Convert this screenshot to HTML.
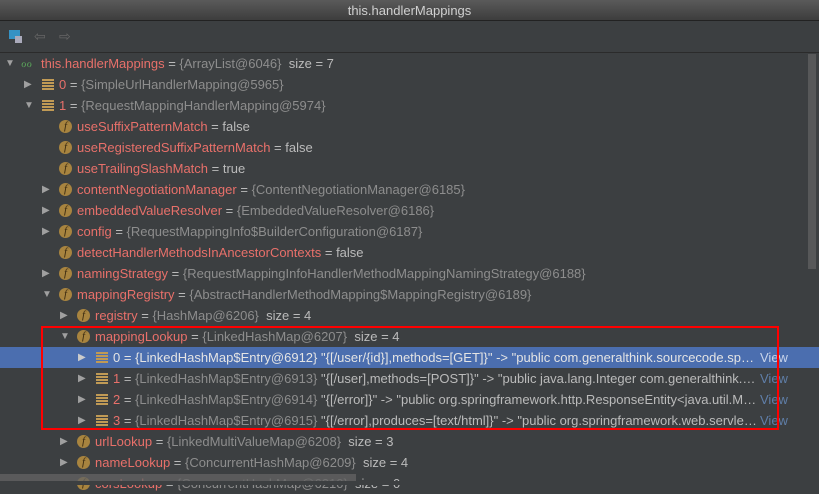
<!DOCTYPE html>
<html><head><meta charset="utf-8"><style>
*{margin:0;padding:0;box-sizing:border-box}
body{width:819px;height:485px;overflow:hidden;background:#3c3f41;font-family:"Liberation Sans",sans-serif;font-size:13px;position:relative}
.title{position:absolute;left:0;top:0;width:819px;height:21px;background:linear-gradient(#5a5a5a,#3d3d3d);border-bottom:1px solid #222;color:#d0d0d0;text-align:center;line-height:21px;font-size:13px}
.tb{position:absolute;left:0;top:21px;width:819px;height:32px;border-bottom:1px solid #2b2b2b;background:#3c3f41}
.row{position:absolute;left:0;width:806px;height:21px;line-height:21px;white-space:nowrap;color:#bbb}
.sel{background:#4b6eaf}
.arr{position:absolute;top:0;color:#a0a0a0;font-size:10px}
.n{color:#e8706a}
.g{color:#8d8d8d}
.fi{position:absolute;top:4px;width:13px;height:13px;border-radius:50%;background:#a8843f;color:#3a2a10;font-family:"Liberation Serif",serif;font-style:italic;font-size:11px;line-height:13px;text-align:center}
.li{position:absolute;top:5px;width:12px;height:11px;background:repeating-linear-gradient(#c09a55 0 2px,#3c3f41 2px 3px)}
.sel .li{background:repeating-linear-gradient(#c09a55 0 2px,#4b6eaf 2px 3px)}
.t{position:absolute;top:0}
.clip{position:absolute;top:0;overflow:hidden;white-space:nowrap;text-overflow:ellipsis}
.view{position:absolute;left:760px;top:0;color:#5f7ea8}
.sel .view{color:#c8d4ea}
.sb{position:absolute;left:808px;top:54px;width:8px;height:215px;background:#575859}
.box{position:absolute;left:41px;top:326px;width:738px;height:104px;border:2px solid #f00}
</style></head><body>
<div class="title">this.handlerMappings</div>
<div class="tb">
<div style="position:absolute;left:9px;top:9px;width:11px;height:9px;background:#3592c4"></div>
<div style="position:absolute;left:15px;top:15px;width:7px;height:7px;background:#aab"></div>
<div style="position:absolute;left:34px;top:7px;color:#666;font-size:14px">⇦</div>
<div style="position:absolute;left:59px;top:7px;color:#666;font-size:14px">⇨</div>
</div>
<div class="sb"></div>

<div class="row" style="top:53px"><span class="arr" style="left:5px">▼</span><span class="t" style="left:21px;color:#5aa55a;font-size:12px">ℴℴ</span><span class="t" style="left:41px"><span class="n">this.handlerMappings</span> = <span class="g">{ArrayList@6046}</span>&nbsp; size = 7</span></div>
<div class="row" style="top:74px"><span class="arr" style="left:24px">▶</span><span class="li" style="left:42px"></span><span class="t" style="left:59px"><span class="n">0</span> = <span class="g">{SimpleUrlHandlerMapping@5965}</span></span></div>
<div class="row" style="top:95px"><span class="arr" style="left:24px">▼</span><span class="li" style="left:42px"></span><span class="t" style="left:59px"><span class="n">1</span> = <span class="g">{RequestMappingHandlerMapping@5974}</span></span></div>
<div class="row" style="top:116px"><span class="fi" style="left:59px">f</span><span class="t" style="left:77px"><span class="n">useSuffixPatternMatch</span> = false</span></div>
<div class="row" style="top:137px"><span class="fi" style="left:59px">f</span><span class="t" style="left:77px"><span class="n">useRegisteredSuffixPatternMatch</span> = false</span></div>
<div class="row" style="top:158px"><span class="fi" style="left:59px">f</span><span class="t" style="left:77px"><span class="n">useTrailingSlashMatch</span> = true</span></div>
<div class="row" style="top:179px"><span class="arr" style="left:42px">▶</span><span class="fi" style="left:59px">f</span><span class="t" style="left:77px"><span class="n">contentNegotiationManager</span> = <span class="g">{ContentNegotiationManager@6185}</span></span></div>
<div class="row" style="top:200px"><span class="arr" style="left:42px">▶</span><span class="fi" style="left:59px">f</span><span class="t" style="left:77px"><span class="n">embeddedValueResolver</span> = <span class="g">{EmbeddedValueResolver@6186}</span></span></div>
<div class="row" style="top:221px"><span class="arr" style="left:42px">▶</span><span class="fi" style="left:59px">f</span><span class="t" style="left:77px"><span class="n">config</span> = <span class="g">{RequestMappingInfo$BuilderConfiguration@6187}</span></span></div>
<div class="row" style="top:242px"><span class="fi" style="left:59px">f</span><span class="t" style="left:77px"><span class="n">detectHandlerMethodsInAncestorContexts</span> = false</span></div>
<div class="row" style="top:263px"><span class="arr" style="left:42px">▶</span><span class="fi" style="left:59px">f</span><span class="t" style="left:77px"><span class="n">namingStrategy</span> = <span class="g">{RequestMappingInfoHandlerMethodMappingNamingStrategy@6188}</span></span></div>
<div class="row" style="top:284px"><span class="arr" style="left:42px">▼</span><span class="fi" style="left:59px">f</span><span class="t" style="left:77px"><span class="n">mappingRegistry</span> = <span class="g">{AbstractHandlerMethodMapping$MappingRegistry@6189}</span></span></div>
<div class="row" style="top:305px"><span class="arr" style="left:60px">▶</span><span class="fi" style="left:77px">f</span><span class="t" style="left:95px"><span class="n">registry</span> = <span class="g">{HashMap@6206}</span>&nbsp; size = 4</span></div>
<div class="row" style="top:326px"><span class="arr" style="left:60px">▼</span><span class="fi" style="left:77px">f</span><span class="t" style="left:95px"><span class="n">mappingLookup</span> = <span class="g">{LinkedHashMap@6207}</span>&nbsp; size = 4</span></div>
<div class="row sel" style="top:347px;width:819px"><span class="arr" style="left:78px;color:#ccc">▶</span><span class="li" style="left:96px"></span><span class="clip" style="left:113px;width:645px;color:#e4e4e4"><span>0</span> = <span>{LinkedHashMap$Entry@6912}</span> "{[/user/{id}],methods=[GET]}" -&gt; "public com.generalthink.sourcecode.springboot.controller.UserController</span><span class="view">View</span></div>
<div class="row" style="top:368px"><span class="arr" style="left:78px">▶</span><span class="li" style="left:96px"></span><span class="clip" style="left:113px;width:645px"><span class="n">1</span> = <span class="g">{LinkedHashMap$Entry@6913}</span> "{[/user],methods=[POST]}" -&gt; "public java.lang.Integer com.generalthink.sourcecode.springboot</span><span class="view">View</span></div>
<div class="row" style="top:389px"><span class="arr" style="left:78px">▶</span><span class="li" style="left:96px"></span><span class="clip" style="left:113px;width:645px"><span class="n">2</span> = <span class="g">{LinkedHashMap$Entry@6914}</span> "{[/error]}" -&gt; "public org.springframework.http.ResponseEntity&lt;java.util.Map&lt;java</span><span class="view">View</span></div>
<div class="row" style="top:410px"><span class="arr" style="left:78px">▶</span><span class="li" style="left:96px"></span><span class="clip" style="left:113px;width:645px"><span class="n">3</span> = <span class="g">{LinkedHashMap$Entry@6915}</span> "{[/error],produces=[text/html]}" -&gt; "public org.springframework.web.servlet.ModelAndView</span><span class="view">View</span></div>
<div class="row" style="top:431px"><span class="arr" style="left:60px">▶</span><span class="fi" style="left:77px">f</span><span class="t" style="left:95px"><span class="n">urlLookup</span> = <span class="g">{LinkedMultiValueMap@6208}</span>&nbsp; size = 3</span></div>
<div class="row" style="top:452px"><span class="arr" style="left:60px">▶</span><span class="fi" style="left:77px">f</span><span class="t" style="left:95px"><span class="n">nameLookup</span> = <span class="g">{ConcurrentHashMap@6209}</span>&nbsp; size = 4</span></div>
<div class="row" style="top:473px"><span class="fi" style="left:77px">f</span><span class="t" style="left:95px"><span class="n">corsLookup</span> = <span class="g">{ConcurrentHashMap@6210}</span>&nbsp; size = 0</span></div>
<div style="position:absolute;left:0;top:474px;width:356px;height:7px;background:rgba(100,100,100,0.75)"></div>
<div style="position:absolute;left:0;top:481px;width:819px;height:4px;background:#3c3f41"></div>
<div class="box"></div>
</body></html>
